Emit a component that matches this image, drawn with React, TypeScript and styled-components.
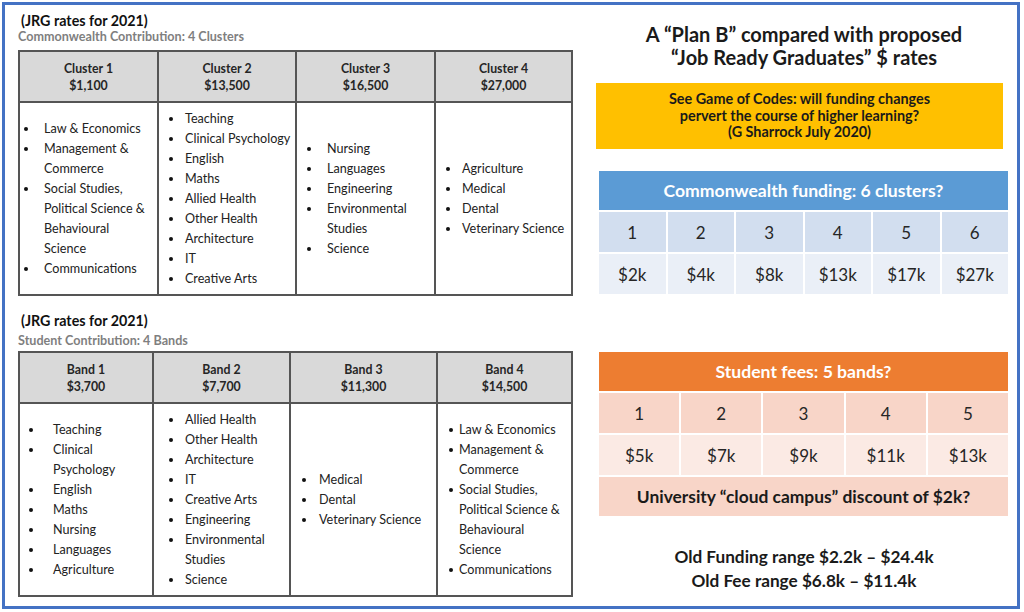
import React from 'react';
import styled, { createGlobalStyle } from 'styled-components';

const Global = createGlobalStyle`
  html, body { margin: 0; padding: 0; background: #ffffff; }
  body { font-family: Lato, "Open Sans", sans-serif; color: #1f1f1f; }
  * { box-sizing: border-box; }
`;

const Frame = styled.div`
  margin: 2px;
  width: 1018px;
  height: 607px;
  border: 3px solid #4472c4;
  display: flex;
  gap: 23px;
  padding-left: 13px;
`;

const LeftCol = styled.div`
  width: 555px;
  display: flex;
  flex-direction: column;
`;

const Section = styled.section<{ $top: number }>`
  margin-top: ${p => p.$top}px;
  display: flex;
  flex-direction: column;
`;

const Heading = styled.div`
  font-size: 14.3px;
  font-weight: 700;
  line-height: 18px;
  color: #111;
  padding-left: 3px;
`;

const SubHeading = styled.div<{ $gap: number; $after: number }>`
  margin-top: ${p => p.$gap}px;
  margin-bottom: ${p => p.$after}px;
  font-size: 12.6px;
  font-weight: 700;
  line-height: 14px;
  color: #7f7f7f;
`;

const Grid = styled.div<{ $cols: string }>`
  display: grid;
  grid-template-columns: ${p => p.$cols};
  border-top: 2px solid #555;
  border-left: 2px solid #555;
`;

const HeadCell = styled.div`
  height: 51px;
  background: #d9d9d9;
  border-right: 2px solid #555;
  border-bottom: 2px solid #555;
  display: flex;
  align-items: center;
  justify-content: center;
  text-align: center;
  font-size: 12.3px;
  font-weight: 700;
  line-height: 17px;
  color: #262626;
`;

const BodyCell = styled.div`
  height: 193px;
  border-right: 2px solid #555;
  border-bottom: 2px solid #555;
  display: flex;
  align-items: center;
`;

const List = styled.ul<{ $text: number }>`
  margin: 0;
  padding: 0 0 0 ${p => p.$text}px;
  list-style: none;
`;

const Item = styled.li<{ $bullet: number }>`
  position: relative;
  font-size: 12.6px;
  line-height: 20px;
  color: #222;
  white-space: pre;
  &::before {
    content: '';
    position: absolute;
    left: ${p => p.$bullet}px;
    top: 8px;
    width: 4px;
    height: 4px;
    border-radius: 50%;
    background: #111;
  }
`;

type Col = { title: string; amount: string; bullet: number; text: number; items: string[] };

const clusters: Col[] = [
  { title: 'Cluster 1', amount: '$1,100', bullet: 4, text: 24, items: ['Law & Economics', 'Management &\nCommerce', 'Social Studies,\nPolitical Science &\nBehavioural\nScience', 'Communications'] },
  { title: 'Cluster 2', amount: '$13,500', bullet: 10, text: 26, items: ['Teaching', 'Clinical Psychology', 'English', 'Maths', 'Allied Health', 'Other Health', 'Architecture', 'IT', 'Creative Arts'] },
  { title: 'Cluster 3', amount: '$16,500', bullet: 10, text: 30, items: ['Nursing', 'Languages', 'Engineering', 'Environmental\nStudies', 'Science'] },
  { title: 'Cluster 4', amount: '$27,000', bullet: 10, text: 26, items: ['Agriculture', 'Medical', 'Dental', 'Veterinary Science'] },
];

const bands: Col[] = [
  { title: 'Band 1', amount: '$3,700', bullet: 9, text: 33, items: ['Teaching', 'Clinical\nPsychology', 'English', 'Maths', 'Nursing', 'Languages', 'Agriculture'] },
  { title: 'Band 2', amount: '$7,700', bullet: 15, text: 31, items: ['Allied Health', 'Other Health', 'Architecture', 'IT', 'Creative Arts', 'Engineering', 'Environmental\nStudies', 'Science'] },
  { title: 'Band 3', amount: '$11,300', bullet: 11, text: 28, items: ['Medical', 'Dental', 'Veterinary Science'] },
  { title: 'Band 4', amount: '$14,500', bullet: 11, text: 21, items: ['Law & Economics', 'Management &\nCommerce', 'Social Studies,\nPolitical Science &\nBehavioural\nScience', 'Communications'] },
];

function RateGrid({ cols, widths }: { cols: Col[]; widths: string }) {
  return (
    <Grid $cols={widths}>
      {cols.map(c => (
        <HeadCell key={c.title + 'h'}>
          {c.title}
          <br />
          {c.amount}
        </HeadCell>
      ))}
      {cols.map(c => (
        <BodyCell key={c.title + 'b'}>
          <List $text={c.text}>
            {c.items.map(it => (
              <Item key={it} $bullet={c.bullet - c.text}>{it}</Item>
            ))}
          </List>
        </BodyCell>
      ))}
    </Grid>
  );
}

const RightCol = styled.div`
  width: 412px;
  display: flex;
  flex-direction: column;
  padding-top: 18px;
`;

const Title = styled.h1`
  margin: 0;
  text-align: center;
  font-size: 20px;
  font-weight: 700;
  line-height: 23px;
  color: #1a1a1a;
  padding-left: 4px;
`;

const Callout = styled.div`
  margin-top: 14px;
  width: 407px;
  height: 66px;
  background: #ffc000;
  display: flex;
  align-items: center;
  justify-content: center;
  text-align: center;
  font-size: 14.4px;
  font-weight: 700;
  line-height: 16.5px;
  color: #1a1a1a;
`;

const Table = styled.div<{ $cols: number; $top: number }>`
  margin-top: ${p => p.$top}px;
  margin-left: 3px;
  width: 409px;
  display: grid;
  grid-template-columns: repeat(${p => p.$cols}, 1fr);
  gap: 2px;
`;

const TableHead = styled.div<{ $bg: string }>`
  grid-column: 1 / -1;
  height: 39px;
  background: ${p => p.$bg};
  color: #ffffff;
  display: flex;
  align-items: center;
  justify-content: center;
  font-size: 17.6px;
  font-weight: 700;
`;

const TableCell = styled.div<{ $bg: string }>`
  height: 40px;
  background: ${p => p.$bg};
  display: flex;
  align-items: center;
  justify-content: center;
  font-size: 17px;
  color: #262626;
`;

const WideCell = styled.div<{ $bg: string }>`
  grid-column: 1 / -1;
  height: 39px;
  background: ${p => p.$bg};
  display: flex;
  align-items: center;
  justify-content: center;
  font-size: 17.4px;
  font-weight: 700;
  color: #1a1a1a;
`;

const Ranges = styled.div`
  margin-top: 29px;
  text-align: center;
  font-size: 17.2px;
  font-weight: 700;
  line-height: 24px;
  color: #1a1a1a;
  padding-left: 4px;
`;

const commonwealth = ['$2k', '$4k', '$8k', '$13k', '$17k', '$27k'];
const fees = ['$5k', '$7k', '$9k', '$11k', '$13k'];

export default function App() {
  return (
    <>
      <Global />
      <Frame>
        <LeftCol>
          <Section $top={7}>
            <Heading>(JRG rates for 2021)</Heading>
            <SubHeading $gap={0} $after={6}>Commonwealth Contribution: 4 Clusters</SubHeading>
            <RateGrid cols={clusters} widths="139px 138px 139px 137px" />
          </Section>
          <Section $top={16}>
            <Heading>(JRG rates for 2021)</Heading>
            <SubHeading $gap={4} $after={3}>Student Contribution: 4 Bands</SubHeading>
            <RateGrid cols={bands} widths="134px 137px 147px 135px" />
          </Section>
        </LeftCol>
        <RightCol>
          <Title>
            A “Plan B” compared with proposed
            <br />
            “Job Ready Graduates” $ rates
          </Title>
          <Callout>
            See Game of Codes: will funding changes
            <br />
            pervert the course of higher learning?
            <br />
            (G Sharrock July 2020)
          </Callout>
          <Table $cols={6} $top={22}>
            <TableHead $bg="#5b9bd5">Commonwealth funding: 6 clusters?</TableHead>
            {commonwealth.map((_, i) => (
              <TableCell key={'n' + i} $bg="#d2deef">{i + 1}</TableCell>
            ))}
            {commonwealth.map(v => (
              <TableCell key={v} $bg="#eaeff7">{v}</TableCell>
            ))}
          </Table>
          <Table $cols={5} $top={58}>
            <TableHead $bg="#ed7d31">Student fees: 5 bands?</TableHead>
            {fees.map((_, i) => (
              <TableCell key={'f' + i} $bg="#f8d5c8">{i + 1}</TableCell>
            ))}
            {fees.map(v => (
              <TableCell key={v} $bg="#fbeae4">{v}</TableCell>
            ))}
            <WideCell $bg="#f8d5c8">University “cloud campus” discount of $2k?</WideCell>
          </Table>
          <Ranges>
            Old Funding range $2.2k – $24.4k
            <br />
            Old Fee range $6.8k – $11.4k
          </Ranges>
        </RightCol>
      </Frame>
    </>
  );
}
